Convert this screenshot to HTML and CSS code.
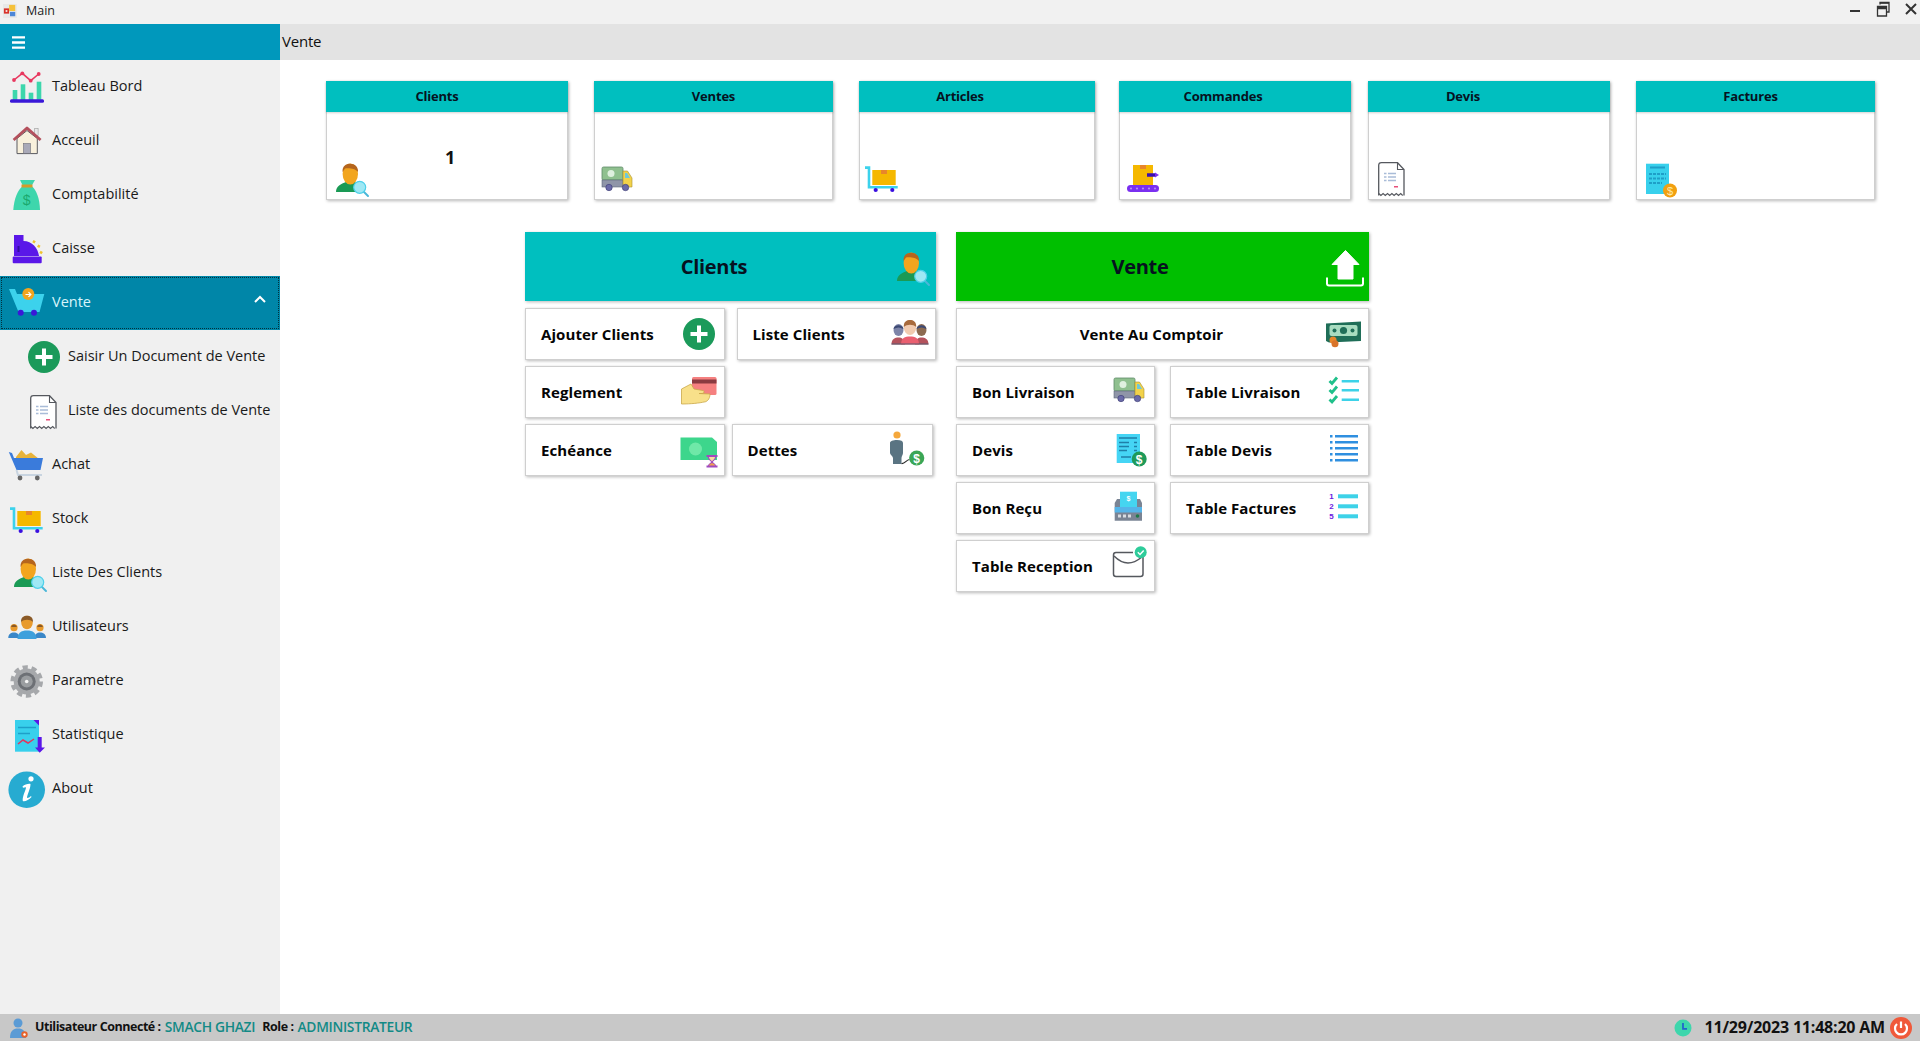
FILE: index.html
```html
<!DOCTYPE html>
<html lang="fr">
<head>
<meta charset="utf-8">
<title>Main</title>
<link rel="stylesheet" href="styles.css">
</head>
<body>
<svg class="defs" aria-hidden="true">
  <symbol id="i-chart" viewBox="0 0 40 40">
    <g fill="#3dd6ac"><rect x="4.7" y="23" width="4.6" height="10"/><rect x="12.7" y="17.3" width="4.6" height="16"/><rect x="20.7" y="25.7" width="4.6" height="8"/><rect x="28.7" y="14.7" width="4.6" height="18"/></g>
    <rect x="2" y="32.3" width="34" height="3.4" rx="1.5" fill="#3a18d8"/>
    <polyline points="6,13 14.3,6.3 22.7,13.7 30.7,7" fill="none" stroke="#e8385f" stroke-width="1.6"/>
    <g fill="#e8385f"><circle cx="6" cy="13" r="1.9"/><circle cx="14.3" cy="6.3" r="1.9"/><circle cx="22.7" cy="13.7" r="1.9"/><circle cx="30.7" cy="7" r="1.9"/></g>
  </symbol>
  <symbol id="i-home" viewBox="0 0 40 40">
    <rect x="26.7" y="7.3" width="3.4" height="7" fill="#e8e8e8" stroke="#999" stroke-width=".6"/>
    <path d="M9 17.5V32.6H29.3V17.5L19 9.5Z" fill="#f8f0dc" stroke="#5a5a60" stroke-width="1"/>
    <path d="M5.6 19 19 7 32.6 19" fill="none" stroke="#b4505c" stroke-width="2.8" stroke-linejoin="round"/>
    <rect x="15.3" y="22.3" width="7.4" height="10" fill="#a9a9b8" stroke="#6a6a72" stroke-width=".5"/>
  </symbol>
  <symbol id="i-register" viewBox="0 0 40 40">
    <path d="M6 6H15.5V12C24 12 30 19 31 27H6Z" fill="#5a17e8"/>
    <rect x="4.7" y="27.5" width="29" height="6.8" rx="1" fill="#5a17e8"/>
    <rect x="9.5" y="17" width="2" height="6" fill="#3110a0"/>
    <g fill="#f0c22e"><rect x="24.6" y="11.5" width="2.6" height="2.6" transform="rotate(30 26 13)"/><rect x="29.6" y="16" width="2.6" height="2.6" transform="rotate(30 31 17)"/><rect x="32" y="22" width="2.6" height="2.6" transform="rotate(30 33 23)"/></g>
  </symbol>
  <symbol id="i-cart" viewBox="0 0 40 40">
    <path d="M1 6H7L9 11H36.3L31.5 29H10.5Z" fill="#3cd2ec"/>
    <circle cx="20.3" cy="11" r="6" fill="#f2a51e"/>
    <path d="M17.5 11.5h5m-2-2.4 2.4 2.4-2.4 2.4" fill="none" stroke="#fff" stroke-width="1.2"/>
    <circle cx="12.7" cy="29.7" r="3" fill="#3a18d8"/><circle cx="26" cy="29.7" r="3" fill="#3a18d8"/>
  </symbol>
  <symbol id="i-plus" viewBox="0 0 40 40">
    <circle cx="20" cy="20" r="16" fill="#1b9a5a"/>
    <path d="M20 11.5V28.5M11.5 20H28.5" stroke="#fff" stroke-width="4"/>
  </symbol>
  <symbol id="i-receipt" viewBox="0 0 40 40">
    <path d="M6.7 37.5V7.5Q6.7 4.7 9.5 4.7H25.5L32 11.5V37.5" fill="#fff" stroke="#55585e" stroke-width="1.3"/>
    <path d="M25.5 4.7V11.5H32" fill="none" stroke="#55585e" stroke-width="1.1"/>
    <path d="M6.7 35.5l2.2 2 2.2-2 2.2 2 2.2-2 2.2 2 2.2-2 2.2 2 2.2-2 2.2 2 2.2-2 2 2" fill="none" stroke="#55585e" stroke-width="1.1"/>
    <path d="M12 15.5h2.5m1.5 0h8M12 19h2.5m1.5 0h8M12 22.5h2.5m1.5 0h8" stroke="#a9bcd8" stroke-width="1.4"/>
    <rect x="22" y="28" width="4" height="1.5" fill="#e8507a"/>
  </symbol>
  <symbol id="i-cart-blue" viewBox="0 0 40 40">
    <path d="M8 12 13.5 5 18 10 23 7.500 31 14H8Z" fill="#e8b33a"/>
    <path d="M.8 7 4 8 6 13H35L32.5 25H8.5Z" fill="#3a7bdb"/>
    <path d="M8.5 25 10 30H34" fill="none" stroke="#c8d4e0" stroke-width="2"/>
    <circle cx="12" cy="33" r="2.4" fill="#666"/><circle cx="29.3" cy="33" r="2.4" fill="#666"/>
  </symbol>
  <symbol id="i-trolley" viewBox="0 0 40 40">
    <rect x="9.3" y="12" width="23.4" height="15" fill="#f5b800"/>
    <rect x="18" y="12" width="6" height="4" fill="#e8862a"/>
    <path d="M2 9.6H6V29.2H34.7" fill="none" stroke="#3cd2ec" stroke-width="2.6"/>
    <circle cx="12.7" cy="32" r="2.1" fill="#3a0fe0"/><circle cx="29.3" cy="32" r="2.1" fill="#3a0fe0"/>
  </symbol>
  <symbol id="i-person" viewBox="0 0 40 40">
    <path d="M6 34C6 28 11 26 16 24H25C27 26 30 28 30 34Z" fill="#1a9a55"/>
    <ellipse cx="20.3" cy="16" rx="7.7" ry="10.5" fill="#f2a51e"/>
    <path d="M12.6 14C12 8 16 5.7 20 5.7 25 5.7 28.5 9 28 14 25 10 18 10 15 10.500Z" fill="#b5651d"/>
    <path d="M33 33 38 38" stroke="#4bb7d8" stroke-width="2" stroke-linecap="round"/>
    <circle cx="29.7" cy="29.3" r="6" fill="#9fe8f4" stroke="#4fd0ea" stroke-width="1.2"/>
  </symbol>
  <symbol id="i-users" viewBox="0 0 40 40">
    <circle cx="6" cy="20.7" r="3.6" fill="#e89a2c"/><circle cx="32" cy="20.7" r="3.6" fill="#e89a2c"/>
    <path d="M6 17.500a3.400 3.400 0 0 1 3 2.500H3a3.400 3.400 0 0 1 3-2.500ZM32 17.500a3.400 3.400 0 0 1 3 2.500h-6a3.400 3.400 0 0 1 3-2.500Z" fill="#8a5a28"/>
    <path d="M.3 31C.3 27 3 25.500 6 25.500S11 27 12 31ZM26 31C27 27 29 25.500 32 25.500S38 27 38 31Z" fill="#3a87c8"/>
    <path d="M9.500 32C9.500 26 13 23.500 19 23.500S28.500 26 28.500 32Z" fill="#3ea0dc"/>
    <ellipse cx="19" cy="15.500" rx="5.800" ry="6.800" fill="#e89a2c"/>
    <path d="M13 15C13 10 16 8.800 19 8.800S25 10 25 15C22 12 16 12 13 15Z" fill="#8a5a28"/>
  </symbol>
  <symbol id="i-gear" viewBox="0 0 40 40">
    <circle cx="18.700" cy="20.500" r="14.300" fill="none" stroke="#a6a8ab" stroke-width="4" stroke-dasharray="5.200 3.780"/>
    <circle cx="18.700" cy="20.500" r="13" fill="#a6a8ab"/>
    <circle cx="18.700" cy="20.500" r="9" fill="#6d7075"/>
    <circle cx="18.700" cy="20.500" r="6" fill="#9a9da0"/>
    <circle cx="18.700" cy="20.500" r="1.800" fill="#f4f4f4"/>
  </symbol>
  <symbol id="i-stat" viewBox="0 0 40 40">
    <path d="M7 5H31V36.700H7Z" fill="#38d0ec"/>
    <path d="M25.500 5H31V10.500Z" fill="#5a17e8"/>
    <path d="M10 12.500H28M10 18.500H22" stroke="#1e9fc8" stroke-width="1.600"/>
    <polyline points="10,29 15,25 20,28 26,24" fill="none" stroke="#e0385f" stroke-width="1.500"/>
    <path d="M29.700 22H33.700V32.500H37L31.700 37.700 27 32.500H29.700Z" fill="#5a17e8"/>
  </symbol>
  <symbol id="i-info" viewBox="0 0 40 40">
    <circle cx="18.700" cy="20.700" r="18.300" fill="#27abd1"/>
    <circle cx="23" cy="9.800" r="2.600" fill="#fff"/>
    <path d="M14.500 17.500C16.500 15.500 20.500 14.500 22.500 15 22.500 20 19 26 19 29 20.500 29 22 28 23 27L23.500 28C21 31 16.500 33 14.800 32 14 28 18 21 18 18.300 16.800 18.300 15.800 18.500 15 18.800Z" fill="#fff"/>
  </symbol>
  <symbol id="i-people" viewBox="0 0 40 40">
    <path d="M1.500 30.500C1.500 25 5 23.500 8.500 23.500S14 25 15 30.500ZM25 30.500C26 25 28 23.500 31.500 23.500S38.500 25 38.500 30.500Z" fill="#b4525c"/>
    <ellipse cx="8.500" cy="16" rx="5" ry="6" fill="#7d84a8"/><ellipse cx="31.500" cy="16" rx="5" ry="6" fill="#8c6a50"/>
    <path d="M3.500 15C4 10 13 10 13.500 15 10 13 7 13 3.500 15ZM26.500 15C27 10 36 10 36.500 15 33 13 30 13 26.500 15Z" fill="#3d4a74"/>
    <path d="M11 30.500C11 24 15 22.500 20 22.500S29 24 29 30.500Z" fill="#ea5f70"/>
    <ellipse cx="20" cy="13.500" rx="6.200" ry="7.500" fill="#f2cbb0"/>
    <path d="M13.800 13C13.500 7.500 17 6 20 6S26.500 7.500 26.200 13C23 10 17 10 13.800 13Z" fill="#a86a3c"/>
    <rect x="1.500" y="29.500" width="37" height="1" fill="#555a70"/>
  </symbol>
  <symbol id="i-card-hand" viewBox="0 0 40 40">
    <rect x="13" y="5" width="24.500" height="18" rx="1.500" fill="#f58080"/>
    <rect x="13" y="7.500" width="24.500" height="4" fill="#8a3a40"/>
    <path d="M2.500 17 12 12 15 17 24 18.500C26 19 25 21.500 23 21.500H20L31 22C31 27 28 30 25 30 21 31 12 32 2.500 32Z" fill="#f8e08a" stroke="#caa84a" stroke-width=".8"/>
  </symbol>
  <symbol id="i-cash-glass" viewBox="0 0 40 40">
    <path d="M1.500 7.500H33L38 12V30H1.500Z" fill="#3dd68c"/>
    <circle cx="16.500" cy="19" r="6.500" fill="#6fe8a8"/>
    <path d="M27.500 25H38.500V27H37C37 30 34 31 34 32 34 33 37 34 37 35.500H38.500V37.500H27.500V35.500H29C29 34 32 33 32 32 32 31 29 30 29 27H27.500Z" fill="#a04ac0"/>
    <path d="M30 27H36C36 29 33 31 33 31.500 33 31 30 29 30 27Z" fill="#f8d8a0"/>
    <path d="M30 35.500H36C36 34 33 33 33 33 33 33 30 34 30 35.500Z" fill="#f0a050"/>
  </symbol>
  <symbol id="i-upload" viewBox="0 0 40 40">
    <path d="M21.500 3.500 35 17.500H29V32H14V17.500H8Z" fill="#fff" stroke="#fff" stroke-linejoin="round"/>
    <path d="M3 30.500V36.500Q3 38.500 5 38.500H37Q39 38.500 39 36.500V30.500" fill="none" stroke="#fff" stroke-width="2"/>
  </symbol>
  <symbol id="i-cash" viewBox="0 0 40 40">
    <path d="M3 9.500 38 7.500V27L6 28.500 3 27Z" fill="#1f6e58"/>
    <rect x="6.500" y="11" width="28" height="11" rx="2" fill="#a8dcc0"/>
    <circle cx="20.500" cy="16.500" r="3.600" fill="#1f6e58"/><circle cx="11.500" cy="16.500" r="2" fill="#1f6e58"/><circle cx="29.500" cy="16.500" r="2" fill="#1f6e58"/>
    <circle cx="10" cy="26" r="3.500" fill="#e8862a"/><circle cx="12" cy="29.800" r="3.500" fill="#d9742a"/>
  </symbol>
  <symbol id="i-truck" viewBox="0 0 40 40">
    <rect x="5" y="6" width="21" height="13" rx="1.500" fill="#8fc08f" stroke="#5e8a68" stroke-width=".8"/>
    <rect x="5" y="19" width="21" height="7" fill="#8f95a8" stroke="#5e6a7a" stroke-width=".6"/>
    <circle cx="14" cy="12.500" r="3.500" fill="#dff0df"/>
    <path d="M26 10H30.500L35 17V26H26Z" fill="#f2d24a" stroke="#a89030" stroke-width=".6"/>
    <path d="M28 12H30L33 17H28Z" fill="#6fc8d8"/>
    <circle cx="12" cy="26.500" r="3.200" fill="#6a6aa8" stroke="#44447a" stroke-width=".7"/>
    <circle cx="28.500" cy="26.500" r="3.200" fill="#6a6aa8" stroke="#44447a" stroke-width=".7"/>
  </symbol>
  <symbol id="i-checklist" viewBox="0 0 40 40">
    <path d="M18.700 9.300H36M18.700 18.300H36M18.700 27.700H36" stroke="#3dd2e8" stroke-width="2.400"/>
    <path d="M6.500 9 9 11.500 14 5.500M6.500 18 9 20.500 14 14.500M6.500 27.500 9 30 14 24" fill="none" stroke="#1fc08a" stroke-width="2.800"/>
  </symbol>
  <symbol id="i-list" viewBox="0 0 40 40">
    <g stroke="#2f8fe0" stroke-width="2.600"><path d="M7 6.300H9.500M12 6.300H35M7 12.300H9.500M12 12.300H35M7 18.300H9.500M12 18.300H35M7 24.300H9.500M12 24.300H35M7 30.300H9.500M12 30.300H35"/></g>
  </symbol>
  <symbol id="i-mail-check" viewBox="0 0 40 40">
    <path d="M24 6.500H7Q4.500 6.500 4.500 9V28Q4.500 30.500 7 30.500H31.500Q34 30.500 34 28V11" fill="none" stroke="#55585e" stroke-width="1.500"/>
    <path d="M5 10C10 15 14 17 19 17S28 15 33 11" fill="none" stroke="#55585e" stroke-width="1.500"/>
    <circle cx="31.700" cy="6.300" r="6" fill="#2ecc9a"/>
    <path d="M28.800 6.300 31 8.500 34.700 4.500" fill="none" stroke="#fff" stroke-width="1.500"/>
  </symbol>
</svg>

<header class="titlebar">
  <div class="title-left">
    <svg class="app-ico" viewBox="0 0 16 16"><rect width="16" height="16" fill="#e8e8e8"/><rect x="1" y="5" width="6" height="6" fill="#d8322a"/><rect x="3" y="7" width="2" height="2" fill="#f4f4f4"/><rect x="7" y="1" width="7" height="7" fill="#f5c13a"/><rect x="8" y="9" width="6" height="5" fill="#4c86d8"/></svg>
    <span>Main</span>
  </div>
  <div class="win-btns">
    <svg class="win-ico" viewBox="0 0 16 16"><rect x="3" y="9" width="10" height="2" fill="#333"/></svg>
    <svg class="win-ico" viewBox="0 0 16 16"><path d="M2.500 5.500H11.500V15H2.500ZM2.500 5.500V7.500H11.500V5.500M5 3.500V1.500H14V11H12" fill="none" stroke="#333" stroke-width="1.300"/><rect x="2.500" y="5" width="9" height="2" fill="#333"/><rect x="5" y="1" width="9" height="1.800" fill="#333"/></svg>
    <svg class="win-ico" viewBox="0 0 16 16"><path d="M3 3 13 13M13 3 3 13" stroke="#333" stroke-width="2"/></svg>
  </div>
</header>

<div class="middle">
  <aside class="sidebar">
    <div class="side-head">
      <svg class="burger" viewBox="0 0 14 14"><path d="M0 1.500H14M0 7H14M0 12.500H14" stroke="#fff" stroke-width="2.600"/></svg>
    </div>
    <nav class="menu">
      <a class="item"><svg class="ico"><use href="#i-chart"/></svg><span>Tableau Bord</span></a>
      <a class="item"><svg class="ico"><use href="#i-home"/></svg><span>Acceuil</span></a>
      <a class="item"><svg class="ico" viewBox="0 0 40 40"><path d="M12 5H27L23.500 11C28 14 32 24 32 35H5.300C6 24 10 14 15 11Z" fill="#3ed6ac"/><rect x="13.500" y="9.500" width="11" height="3" fill="#d59a2a"/><text x="18.700" y="30" font-size="14" font-family="Liberation Sans" text-anchor="middle" fill="#1aa96c">$</text></svg><span>Comptabilité</span></a>
      <a class="item"><svg class="ico"><use href="#i-register"/></svg><span>Caisse</span></a>
      <a class="item active"><svg class="ico"><use href="#i-cart"/></svg><span>Vente</span>
        <svg class="chev" viewBox="0 0 12 8"><path d="M1 7 6 2 11 7" fill="none" stroke="#fff" stroke-width="2"/></svg></a>
      <a class="item sub"><svg class="ico"><use href="#i-plus"/></svg><span>Saisir Un Document de Vente</span></a>
      <a class="item sub"><svg class="ico"><use href="#i-receipt"/></svg><span>Liste des documents de Vente</span></a>
      <a class="item"><svg class="ico"><use href="#i-cart-blue"/></svg><span>Achat</span></a>
      <a class="item"><svg class="ico"><use href="#i-trolley"/></svg><span>Stock</span></a>
      <a class="item"><svg class="ico"><use href="#i-person"/></svg><span>Liste Des Clients</span></a>
      <a class="item"><svg class="ico"><use href="#i-users"/></svg><span>Utilisateurs</span></a>
      <a class="item"><svg class="ico"><use href="#i-gear"/></svg><span>Parametre</span></a>
      <a class="item"><svg class="ico"><use href="#i-stat"/></svg><span>Statistique</span></a>
      <a class="item"><svg class="ico"><use href="#i-info"/></svg><span>About</span></a>
    </nav>
  </aside>

  <main class="main">
    <div class="topbar"><span>Vente</span></div>
    <div class="content">
      <section class="cards">
        <article class="card c1">
          <h3 class="card-head">Clients</h3>
          <div class="card-body"><svg class="ico"><use href="#i-person"/></svg><span class="card-value">1</span></div>
        </article>
        <article class="card c2">
          <h3 class="card-head">Ventes</h3>
          <div class="card-body"><svg class="ico drop"><use href="#i-truck"/></svg></div>
        </article>
        <article class="card c3">
          <h3 class="card-head">Articles</h3>
          <div class="card-body"><svg class="ico"><use href="#i-trolley"/></svg></div>
        </article>
        <article class="card c4">
          <h3 class="card-head">Commandes</h3>
          <div class="card-body"><svg class="ico" viewBox="0 0 40 40"><rect x="10" y="7" width="20" height="20" fill="#f5b800"/><rect x="17" y="7" width="6" height="4" fill="#e8862a"/><path d="M24 17H33" stroke="#3a0fb0" stroke-width="3.500"/><path d="M32 14.500 36 17 32 19.500Z" fill="#7a2ff0"/><rect x="4" y="27" width="32" height="7" rx="3.500" fill="#7a2ff0"/><g fill="#b48cf8"><circle cx="8" cy="30.500" r="1.100"/><circle cx="14" cy="30.500" r="1.100"/><circle cx="20" cy="30.500" r="1.100"/><circle cx="26" cy="30.500" r="1.100"/><circle cx="32" cy="30.500" r="1.100"/></g></svg></div>
        </article>
        <article class="card c5">
          <h3 class="card-head">Devis</h3>
          <div class="card-body"><svg class="ico"><use href="#i-receipt"/></svg></div>
        </article>
        <article class="card c6">
          <h3 class="card-head">Factures</h3>
          <div class="card-body"><svg class="ico" viewBox="0 0 40 40"><rect x="6" y="5.700" width="23" height="30.300" fill="#38d0ec"/><path d="M10 9.500H25" stroke="#1e9fc8" stroke-width="2"/><path d="M9 16H26M9 20.500H26M9 25H22" stroke="#1e9fc8" stroke-width="2" stroke-dasharray="3 1"/><circle cx="30" cy="32.500" r="7" fill="#f2a010"/><text x="30" y="36.500" font-size="11" font-family="Liberation Sans" text-anchor="middle" fill="#ffe9a8">$</text></svg></div>
        </article>
      </section>

      <section class="panels">
        <div class="panel">
          <div class="p-head teal"><span class="p-title shift-a">Clients</span><svg class="ico"><use href="#i-person"/></svg></div>
          <button class="btn"><span>Ajouter Clients</span><svg class="ico"><use href="#i-plus"/></svg></button>
          <button class="btn"><span>Liste Clients</span><svg class="ico"><use href="#i-people"/></svg></button>
          <button class="btn col1"><span>Reglement</span><svg class="ico"><use href="#i-card-hand"/></svg></button>
          <button class="btn col1"><span>Echéance</span><svg class="ico"><use href="#i-cash-glass"/></svg></button>
          <button class="btn nudge"><span>Dettes</span><svg class="ico" viewBox="0 0 40 40"><circle cx="10" cy="5" r="3.600" fill="#f5a83c"/><path d="M3 13C3 11 6 10 10 10S16 11 16 13V23C16 25 14.500 26 14.500 28V34H6V28C6 26 3 25 3 23Z" fill="#5a7482"/><path d="M14.500 33.500C18 34 19 30 22.500 29.500" fill="none" stroke="#2a2a2a" stroke-width="1.200"/><circle cx="29.700" cy="28" r="7.600" fill="#3aa655"/><text x="29.700" y="32.500" font-size="12" font-weight="700" font-family="Liberation Sans" text-anchor="middle" fill="#fff">$</text></svg></button>
        </div>
        <div class="panel right">
          <div class="p-head green"><span class="p-title">Vente</span><svg class="ico"><use href="#i-upload"/></svg></div>
          <button class="btn wide"><span class="wide-label">Vente Au Comptoir</span><svg class="ico"><use href="#i-cash"/></svg></button>
          <button class="btn"><span>Bon Livraison</span><svg class="ico"><use href="#i-truck"/></svg></button>
          <button class="btn"><span>Table Livraison</span><svg class="ico"><use href="#i-checklist"/></svg></button>
          <button class="btn"><span>Devis</span><svg class="ico" viewBox="0 0 40 40"><rect x="7.700" y="4" width="23.300" height="29" fill="#45d5f5"/><path d="M10 8H28M10 12.500H20M10 16.500H20M10 20.500H18M12 27H22M25 12.500H28M25 16.500H28M25 20.500H28" stroke="#1f7fa8" stroke-width="1.300"/><circle cx="30.200" cy="29" r="7.500" fill="#1f9a5a"/><text x="30.200" y="33.500" font-size="12" font-weight="700" font-family="Liberation Sans" text-anchor="middle" fill="#fff">$</text></svg></button>
          <button class="btn"><span>Table Devis</span><svg class="ico"><use href="#i-list"/></svg></button>
          <button class="btn"><span>Bon Reçu</span><svg class="ico" viewBox="0 0 40 40"><path d="M8 11H31L33 15V32.700H5.700V15Z" fill="#7a8494"/><rect x="11" y="3.700" width="17" height="15.500" fill="#45d5f0"/><text x="19.500" y="13" font-size="7" font-family="Liberation Sans" text-anchor="middle" fill="#fff">$</text><rect x="5.700" y="19" width="27.300" height="5.500" fill="#55b4e8"/><g fill="#d8dce2"><rect x="9" y="26.500" width="3" height="3"/><rect x="14" y="26.500" width="3" height="3"/><rect x="19" y="26.500" width="3" height="3"/></g><circle cx="28.500" cy="28" r="1.800" fill="#1f7a4a"/></svg></button>
          <button class="btn"><span>Table Factures</span><svg class="ico" viewBox="0 0 40 40"><g fill="#3dd2e8"><rect x="15" y="6.300" width="20" height="4"/><rect x="15" y="16.300" width="20" height="4"/><rect x="15" y="26.300" width="20" height="4"/></g><g fill="#6a20e0" font-family="Liberation Sans" font-size="8" font-weight="700" text-anchor="middle"><text x="8.500" y="11">1</text><text x="8.500" y="21">2</text><text x="8.500" y="31">5</text></g></svg></button>
          <button class="btn"><span>Table Reception</span><svg class="ico"><use href="#i-mail-check"/></svg></button>
        </div>
      </section>
    </div>
  </main>
</div>

<footer class="statusbar">
  <div class="st-left">
    <svg class="st-user" viewBox="0 0 18 20"><circle cx="8" cy="5" r="4.500" fill="#5b9bd5"/><path d="M0 20C0 13 3 10.500 8 10.500S16 13 16 20Z" fill="#5b9bd5"/><circle cx="14.500" cy="16.500" r="3.200" fill="#e8622a"/><circle cx="14.500" cy="16.500" r="1.200" fill="#fff"/></svg>
    <span class="st-label">Utilisateur Connecté :</span>
    <span class="st-val">SMACH GHAZI</span>
    <span class="st-label">Role :</span>
    <span class="st-val">ADMINISTRATEUR</span>
  </div>
  <div class="st-right">
    <svg class="st-clock" viewBox="0 0 18 18"><circle cx="9" cy="9" r="8.500" fill="#3dd6ac"/><path d="M9 4V9.800H13" fill="none" stroke="#2266cc" stroke-width="1.800"/></svg>
    <span class="st-time">11/29/2023 11:48:20 AM</span>
    <svg class="st-power" viewBox="0 0 22 22"><circle cx="11" cy="11" r="11" fill="#f0593a"/><path d="M11 4.500V11M7 7A6 6 0 1 0 15 7" fill="none" stroke="#fff" stroke-width="2.200"/></svg>
  </div>
</footer>
</body>
</html>
```
FILE: styles.css
```css
* { box-sizing: border-box; }
html, body { height: 100%; }
body {
  margin: 0;
  display: flex;
  flex-direction: column;
  height: 100vh;
  overflow: hidden;
  background: #fff;
  color: #111;
  font-family: "Open Sans", "Noto Sans", sans-serif;
  font-size: 14px;
}
.defs { position: absolute; width: 0; height: 0; }
.ico { width: 40px; height: 40px; flex: none; overflow: visible; display: block; }

/* title bar */
.titlebar {
  height: 24px;
  flex: none;
  display: flex;
  justify-content: space-between;
  align-items: flex-start;
  background: #f1f1f1;
}
.title-left { display: flex; align-items: center; gap: 9px; padding: 2px 0 0 3px; font-size: 12.5px; color: #222; }
.app-ico { width: 14px; height: 14px; }
.win-btns { display: flex; gap: 12px; padding: 1px 1px 0 0; }
.win-ico { width: 16px; height: 16px; display: block; }

/* layout */
.middle { flex: 1; display: flex; min-height: 0; }
.sidebar { width: 280px; flex: none; background: #f0f0f0; display: flex; flex-direction: column; }
.side-head { height: 36px; flex: none; background: #0098bc; display: flex; align-items: center; padding-left: 12px; }
.burger { width: 13px; height: 13px; }
.menu { display: flex; flex-direction: column; }
.item {
  height: 54px;
  display: flex;
  align-items: center;
  gap: 4px;
  padding-left: 8px;
  font-size: 14.5px;
  color: #1a1a1a;
}
.item span { margin-top: -3px; }
.item.sub { padding-left: 24px; }
.item.active {
  background: #0086a8;
  color: #d9f5fb;
  outline: 1px dotted #02313d;
  outline-offset: -2px;
}
.chev { width: 12px; height: 8px; margin: -8px 14px 0 auto; }

.main { flex: 1; display: flex; flex-direction: column; min-width: 0; }
.topbar { height: 36px; flex: none; background: #e3e3e3; display: flex; align-items: center; padding: 0 0 2px 2px; font-size: 15px; letter-spacing: -.2px; }
.content { flex: 1; padding: 21px 0 0 46px; }

/* stat cards */
.cards { display: flex; align-items: flex-start; }
.card {
  height: 119px;
  background: #fff;
  border: 1px solid #cfcfcf;
  box-shadow: 1px 1px 3px rgba(0, 0, 0, .28);
  display: flex;
  flex-direction: column;
}
.card-head {
  height: 31px;
  margin: -1px -1px 0;
  flex: none;
  background: #00bfbf;
  color: #06121f;
  font-size: 13px;
  font-weight: 700;
  letter-spacing: -.2px;
  display: flex;
  align-items: center;
  justify-content: center;
  padding-bottom: 2px;
  box-shadow: 0 1px 2px rgba(0, 0, 0, .18);
}
.card-body { flex: 1; display: flex; align-items: flex-end; padding: 0 0 1px 3px; }
.card-value { align-self: flex-start; margin: 32px 0 0 75px; font-size: 18px; font-weight: 700; line-height: 26px; }
.ico.drop { margin-bottom: -3px; margin-left: -1px; }
.c1 { width: 242px; }
.c2 { width: 239px; margin-left: 26px; }
.c3 { width: 236px; margin-left: 26px; }
.c4 { width: 232px; margin-left: 24px; }
.c5 { width: 242px; margin-left: 17px; }
.c6 { width: 239px; margin-left: 26px; }
.c1 .card-head { padding-right: 20px; }
.c3 .card-head { padding-right: 34px; }
.c4 .card-head { padding-right: 24px; }
.c5 .card-head { padding-right: 52px; }
.c6 .card-head { padding-right: 10px; }

/* panels */
.panels { display: flex; align-items: flex-start; gap: 20px; margin: 32px 0 0 199px; }
.panel {
  width: 411px;
  display: grid;
  grid-template-columns: 1fr 1fr;
  grid-auto-rows: 52px;
  gap: 6px 12px;
  grid-template-rows: 70px;
}
.panel.right { width: 413px; column-gap: 15px; }
.p-head {
  grid-column: 1 / -1;
  margin-bottom: 1px;
  display: flex;
  align-items: center;
  padding-right: 5px;
  box-shadow: 1px 1px 3px rgba(0, 0, 0, .28);
}
.p-head.teal { background: #00bfbf; }
.p-head.green { background: #00bf00; }
.p-title { flex: 1; text-align: center; color: #06121f; font-size: 20px; font-weight: 700; letter-spacing: -.3px; }
.p-title.shift-a { padding-left: 12px; }
.btn {
  display: flex;
  align-items: center;
  justify-content: space-between;
  padding: 0 5px 0 15px;
  background: #fff;
  border: 1px solid #cfcfcf;
  box-shadow: 1px 1px 3px rgba(0, 0, 0, .28);
  font-family: inherit;
  font-size: 15px;
  font-weight: 700;
  letter-spacing: .08px;
  color: #050505;
}
.col1 { grid-column: 1; }
.nudge { margin: 0 3px 0 -5px; }
.btn.wide { grid-column: 1 / -1; }
.wide-label { flex: 1; text-align: center; padding-left: 8px; }

/* status bar */
.statusbar {
  height: 27px;
  flex: none;
  background: #c8c8c8;
  display: flex;
  justify-content: space-between;
  align-items: center;
  padding: 0 8px 0 10px;
}
.st-left, .st-right { display: flex; align-items: center; }
.st-left span, .st-time { margin-top: -2px; }
.st-user { width: 18px; height: 20px; margin-right: 7px; }
.st-label { font-size: 12.5px; font-weight: 700; letter-spacing: -.45px; margin-right: 4px; }
.st-val { font-size: 13.8px; font-weight: 600; letter-spacing: -.3px; color: #128a86; margin-right: 7px; }
.st-clock { width: 18px; height: 18px; margin-right: 13px; }
.st-time { font-size: 16px; font-weight: 700; letter-spacing: -.2px; margin-right: 5px; }
.st-power { width: 22px; height: 22px; }
```
